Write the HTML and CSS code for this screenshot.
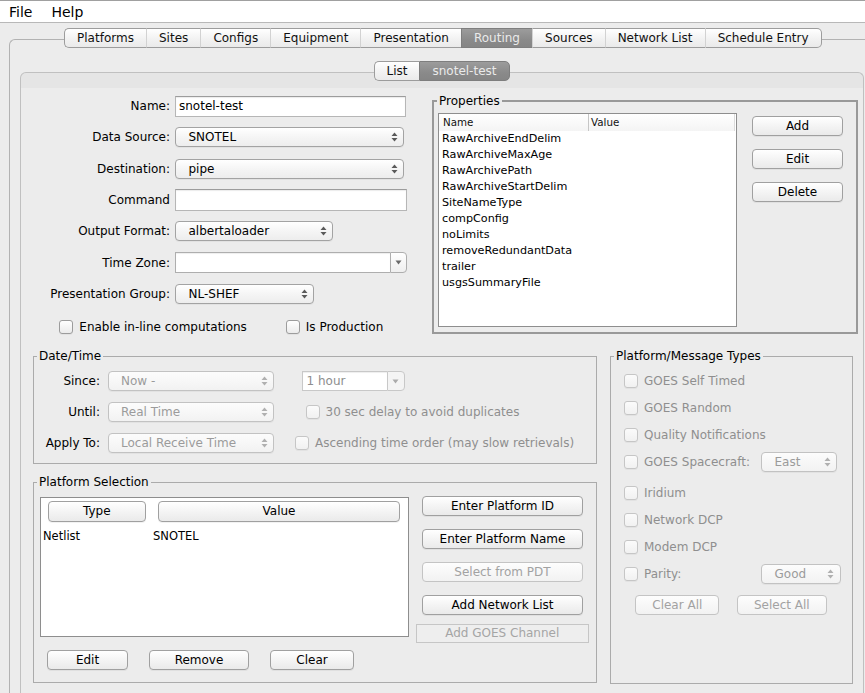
FILE: index.html
```html
<!DOCTYPE html>
<html>
<head>
<meta charset="utf-8">
<title>Routing</title>
<link rel="stylesheet" href="styles.css">
</head>
<body>
<div class="menubar"><span class="menu">File</span><span class="menu">Help</span></div>
<div class="outer">
  <div class="tabs outer-tabs">
    <div class="tab first">Platforms</div>
    <div class="tab">Sites</div>
    <div class="tab">Configs</div>
    <div class="tab">Equipment</div>
    <div class="tab">Presentation</div>
    <div class="tab sel">Routing</div>
    <div class="tab">Sources</div>
    <div class="tab">Network List</div>
    <div class="tab last">Schedule Entry</div>
  </div>
  <div class="inner">
    <div class="tabs inner-tabs">
      <div class="tab first itab">List</div>
      <div class="tab sel last itab">snotel-test</div>
    </div>

    <div class="top">
      <div class="form">
        <div class="lbl">Name:</div>
        <div class="tf w-name">snotel-test</div>

        <div class="lbl">Data Source:</div>
        <div class="combo w-src"><span class="ctext">SNOTEL</span><svg class="arr" width="7" height="10" viewBox="0 0 7 10"><path d="M3.5 0.5 L6.5 4 H0.5 Z M3.5 9.5 L6.5 6 H0.5 Z" fill="#5a5a5a"/></svg></div>

        <div class="lbl">Destination:</div>
        <div class="combo w-src"><span class="ctext">pipe</span><svg class="arr" width="7" height="10" viewBox="0 0 7 10"><path d="M3.5 0.5 L6.5 4 H0.5 Z M3.5 9.5 L6.5 6 H0.5 Z" fill="#5a5a5a"/></svg></div>

        <div class="lbl">Command</div>
        <div class="tf w-cmd"></div>

        <div class="lbl">Output Format:</div>
        <div class="combo w-fmt"><span class="ctext">albertaloader</span><svg class="arr" width="7" height="10" viewBox="0 0 7 10"><path d="M3.5 0.5 L6.5 4 H0.5 Z M3.5 9.5 L6.5 6 H0.5 Z" fill="#5a5a5a"/></svg></div>

        <div class="lbl">Time Zone:</div>
        <div class="ecombo w-tz"><div class="efield"></div><div class="ebtn"><svg width="7" height="5" viewBox="0 0 7 5"><path d="M0.5 0.5 H6.5 L3.5 4.5 Z" fill="#6a6a6a"/></svg></div></div>

        <div class="lbl">Presentation Group:</div>
        <div class="combo w-pg"><span class="ctext">NL-SHEF</span><svg class="arr" width="7" height="10" viewBox="0 0 7 10"><path d="M3.5 0.5 L6.5 4 H0.5 Z M3.5 9.5 L6.5 6 H0.5 Z" fill="#5a5a5a"/></svg></div>

        <div class="cb-row">
          <div class="cbl"><span class="cb"></span><span>Enable in-line computations</span></div>
          <div class="cbl"><span class="cb"></span><span>Is Production</span></div>
        </div>
      </div>

      <div class="group props">
        <div class="gtitle">Properties</div>
        <div class="props-body">
          <div class="ptable">
            <div class="phead"><span class="pname">Name</span><span class="pval">Value</span></div>
            <div class="prow">RawArchiveEndDelim</div>
            <div class="prow">RawArchiveMaxAge</div>
            <div class="prow">RawArchivePath</div>
            <div class="prow">RawArchiveStartDelim</div>
            <div class="prow">SiteNameType</div>
            <div class="prow">compConfig</div>
            <div class="prow">noLimits</div>
            <div class="prow">removeRedundantData</div>
            <div class="prow">trailer</div>
            <div class="prow">usgsSummaryFile</div>
          </div>
          <div class="pbtns">
            <div class="btn w-pb">Add</div>
            <div class="btn w-pb">Edit</div>
            <div class="btn w-pb">Delete</div>
          </div>
        </div>
      </div>
    </div>

    <div class="middle">
      <div class="leftcol">
        <div class="group dt">
          <div class="gtitle">Date/Time</div>
          <div class="dt-grid">
            <div class="lbl">Since:</div>
            <div class="combo dis"><span class="ctext">Now -</span><svg class="arr" width="7" height="10" viewBox="0 0 7 10"><path d="M3.5 0.5 L6.5 4 H0.5 Z M3.5 9.5 L6.5 6 H0.5 Z" fill="#b0b0b0"/></svg></div>
            <div class="ecombo dis w-hour"><div class="efield">1 hour</div><div class="ebtn"><svg width="7" height="5" viewBox="0 0 7 5"><path d="M0.5 0.5 H6.5 L3.5 4.5 Z" fill="#ababab"/></svg></div></div>

            <div class="lbl">Until:</div>
            <div class="combo dis"><span class="ctext">Real Time</span><svg class="arr" width="7" height="10" viewBox="0 0 7 10"><path d="M3.5 0.5 L6.5 4 H0.5 Z M3.5 9.5 L6.5 6 H0.5 Z" fill="#b0b0b0"/></svg></div>
            <div class="cbl dis c-delay"><span class="cb dis"></span><span>30 sec delay to avoid duplicates</span></div>

            <div class="lbl">Apply To:</div>
            <div class="combo dis"><span class="ctext">Local Receive Time</span><svg class="arr" width="7" height="10" viewBox="0 0 7 10"><path d="M3.5 0.5 L6.5 4 H0.5 Z M3.5 9.5 L6.5 6 H0.5 Z" fill="#b0b0b0"/></svg></div>
            <div class="cbl dis c-asc"><span class="cb dis"></span><span>Ascending time order (may slow retrievals)</span></div>
          </div>
        </div>

        <div class="group ps">
          <div class="gtitle">Platform Selection</div>
          <div class="ps-body">
            <div class="ps-left">
              <div class="pstable">
                <div class="pshead">
                  <div class="btn w-type">Type</div>
                  <div class="btn w-value">Value</div>
                </div>
                <div class="psrow"><span class="pscol">Netlist</span><span>SNOTEL</span></div>
              </div>
              <div class="psbtns">
                <div class="btn w-edit">Edit</div>
                <div class="btn w-remove">Remove</div>
                <div class="btn w-clear">Clear</div>
              </div>
            </div>
            <div class="ps-right">
              <div class="btn w-rb">Enter Platform ID</div>
              <div class="btn w-rb">Enter Platform Name</div>
              <div class="btn dis w-rb">Select from PDT</div>
              <div class="btn w-rb">Add Network List</div>
              <div class="flatbtn">Add GOES Channel</div>
            </div>
          </div>
        </div>
      </div>

      <div class="group mt">
        <div class="gtitle">Platform/Message Types</div>
        <div class="mt-body">
          <div class="mrow"><div class="cbl dis"><span class="cb dis"></span><span>GOES Self Timed</span></div></div>
          <div class="mrow"><div class="cbl dis"><span class="cb dis"></span><span>GOES Random</span></div></div>
          <div class="mrow"><div class="cbl dis"><span class="cb dis"></span><span>Quality Notifications</span></div></div>
          <div class="mrow tall gap"><div class="cbl dis"><span class="cb dis"></span><span>GOES Spacecraft:</span></div><div class="combo dis w-east"><span class="ctext">East</span><svg class="arr" width="7" height="10" viewBox="0 0 7 10"><path d="M3.5 0.5 L6.5 4 H0.5 Z M3.5 9.5 L6.5 6 H0.5 Z" fill="#b0b0b0"/></svg></div></div>
          <div class="mrow"><div class="cbl dis"><span class="cb dis"></span><span>Iridium</span></div></div>
          <div class="mrow"><div class="cbl dis"><span class="cb dis"></span><span>Network DCP</span></div></div>
          <div class="mrow"><div class="cbl dis"><span class="cb dis"></span><span>Modem DCP</span></div></div>
          <div class="mrow tall"><div class="cbl dis"><span class="cb dis"></span><span>Parity:</span></div><div class="combo dis w-good"><span class="ctext">Good</span><svg class="arr" width="7" height="10" viewBox="0 0 7 10"><path d="M3.5 0.5 L6.5 4 H0.5 Z M3.5 9.5 L6.5 6 H0.5 Z" fill="#b0b0b0"/></svg></div></div>
          <div class="mbtns">
            <div class="btn dis w-clearall">Clear All</div>
            <div class="btn dis w-selall">Select All</div>
          </div>
        </div>
      </div>
    </div>
  </div>
</div>
</body>
</html>
```
FILE: styles.css
```css
* { box-sizing: border-box; }
html, body { margin: 0; padding: 0; }
body {
  width: 865px;
  height: 693px;
  overflow: hidden;
  background: #ececec;
  font-family: "DejaVu Sans", Verdana, sans-serif;
  font-size: 12px;
  color: #111;
}

/* menu bar */
.menubar {
  height: 23px;
  background: #fff;
  border-top: 1px solid #a0a0a0;
  border-bottom: 1px solid #b8b8b8;
  display: flex;
  align-items: center;
  padding-left: 9px;
  gap: 19px;
  font-size: 14px;
  color: #000;
}

/* tabbed panes */
.outer {
  margin: 16px 0 0 9px;
  width: 856px;
  height: 654px;
  border: 1px solid #b2b2b2;
  border-right: none;
  border-bottom: none;
  border-radius: 6px 0 0 0;
}
.tabs {
  display: flex;
  height: 20px;
  margin-top: -12px;
}
.outer-tabs { padding-left: 54px; }
.inner-tabs { justify-content: center; }
.tab {
  height: 20px;
  line-height: 18px;
  padding: 0 12.05px;
  border-top: 1px solid #9c9c9c;
  border-bottom: 1px solid #9c9c9c;
  border-left: 1px solid #d2d2d2;
  background: linear-gradient(#ffffff, #f2f2f2 55%, #eaeaea);
  white-space: nowrap;
  color: #111;
}
.tab.itab { padding: 0 11.5px; }
.tab.itab.sel { padding: 0 12.5px; }
.tab.first { border-left: 1px solid #9c9c9c; border-radius: 5px 0 0 5px; }
.tab.last { border-right: 1px solid #9c9c9c; border-radius: 0 5px 5px 0; }
.tab.sel {
  background: linear-gradient(#9c9c9c, #8a8a8a 60%, #858585);
  color: #eaeaea;
  border-color: #7e7e7e;
}

.inner {
  margin: 24px 0 0 10px;
  width: 844px;
  height: 621px;
  border: 1px solid #c0c0c0;
  border-bottom: none;
  border-radius: 6px 6px 0 0;
  background: linear-gradient(#e5e5e5 0, #e5e5e5 15px, #ececec 15px);
}

/* top section */
.top {
  display: grid;
  grid-template-columns: 411px 426px;
  height: 253px;
}
.form {
  display: grid;
  grid-template-columns: 149px auto;
  column-gap: 5px;
  grid-auto-rows: 31.3px;
  align-items: center;
  justify-items: start;
  align-content: start;
  padding-top: 9.4px;
}
.lbl { justify-self: end; color: #000; white-space: nowrap; }

.tf {
  height: 21px;
  border: 1px solid #b6b6b6;
  border-top-color: #9c9c9c;
  background: #fff;
  padding-left: 3px;
  line-height: 19px;
  box-shadow: inset 0 1px 1px rgba(0,0,0,0.08);
  color: #000;
}
.w-name { width: 231px; }
.w-cmd { width: 232px; height: 21.5px; }

.combo {
  height: 20px;
  border: 1px solid #a3a3a3;
  border-radius: 4px;
  background: linear-gradient(#ffffff, #f5f5f5 50%, #ededed);
  display: flex;
  align-items: center;
  padding-left: 12.5px;
  box-shadow: 0 1px 0 rgba(0,0,0,0.04);
  color: #000;
  white-space: nowrap;
}
.combo .ctext { flex: 1; }
.combo .arr { flex: none; margin-right: 5.5px; }
.combo.dis {
  color: #9b9b9b;
  border-color: #c2c2c2;
  background: linear-gradient(#fcfcfc, #f2f2f2);
}
.w-src { width: 229px; }
.w-fmt { width: 158px; }
.w-pg { width: 139px; }

.ecombo {
  display: flex;
  height: 21px;
}
.ecombo .efield {
  flex: 1;
  border: 1px solid #aeaeae;
  border-right: none;
  background: #fff;
  padding-left: 4px;
  line-height: 19px;
  box-shadow: inset 0 1px 1px rgba(0,0,0,0.07);
}
.ecombo .ebtn {
  width: 17.5px;
  border: 1px solid #aeaeae;
  border-radius: 0 4px 4px 0;
  background: linear-gradient(#ffffff, #efefef);
  display: flex;
  align-items: center;
  justify-content: center;
}
.ecombo.dis .efield { border-color: #c8c8c8; color: #8e8e8e; }
.ecombo.dis .ebtn { border-color: #c8c8c8; background: #f4f4f4; }
.w-tz { width: 232px; }
.w-hour { width: 103px; }

.cb-row {
  grid-column: 1 / -1;
  display: grid;
  grid-template-columns: 226.5px auto;
  padding-left: 38.3px;
  margin-top: 3px;
}
.cbl {
  display: flex;
  align-items: center;
  gap: 6px;
  white-space: nowrap;
  color: #000;
}
.cbl.dis { color: #8f8f8f; }
.cb {
  width: 14px;
  height: 14px;
  flex: none;
  border: 1px solid #9c9c9c;
  border-radius: 3px;
  background: linear-gradient(#ffffff, #ebebeb);
  box-shadow: 0 1px 0 rgba(0,0,0,0.04);
}
.cb.dis {
  border-color: #c6c6c6;
  background: linear-gradient(#fbfbfb, #f1f1f1);
}

/* group boxes */
.group { border: 1px solid #ababab; }
.gtitle {
  display: table;
  margin: -8px 0 0 3px;
  padding: 0 2px;
  background: #ececec;
  line-height: 14px;
  color: #000;
}

.props {
  margin-top: 19px;
  height: 234px;
  align-self: start;
  border: 2px solid #999;
}
.props-body {
  display: flex;
  margin-top: 5px;
  padding-left: 4px;
}
.ptable {
  width: 299px;
  height: 214px;
  border: 1px solid #8e8e8e;
  background: #fff;
}
.phead {
  display: flex;
  height: 17px;
  width: 296px;
  line-height: 17px;
  font-size: 10.3px;
  background: linear-gradient(#ffffff, #f4f4f4);
  border-right: 1px solid #dcdcdc;
}
.pname { width: 150px; padding-left: 4px; border-right: 1px solid #c6c6c6; }
.pval { padding-left: 2px; }
.prow {
  height: 16px;
  line-height: 16px;
  padding-left: 3px;
  font-size: 11.2px;
  color: #000;
}
.pbtns {
  display: flex;
  flex-direction: column;
  gap: 13px;
  margin: 3px 0 0 15px;
}

.btn {
  height: 20px;
  border: 1px solid #a0a0a0;
  border-radius: 4px;
  background: linear-gradient(#ffffff, #f4f4f4 50%, #eaeaea);
  display: flex;
  align-items: center;
  justify-content: center;
  white-space: nowrap;
  box-shadow: 0 1px 0 rgba(0,0,0,0.05);
  color: #000;
  flex: none;
}
.btn.dis {
  color: #a2a2a2;
  border-color: #c4c4c4;
  background: linear-gradient(#fdfdfd, #f2f2f2);
  box-shadow: none;
}
.w-pb { width: 91px; }

/* middle section */
.middle {
  display: grid;
  grid-template-columns: 564px 243px;
  column-gap: 13px;
  margin-top: 22px;
  padding-left: 12px;
  align-items: start;
}
.dt { height: 108px; }
.dt-grid {
  display: grid;
  grid-template-columns: 66px 166.5px auto;
  column-gap: 7.5px;
  grid-auto-rows: 20px;
  row-gap: 11px;
  align-items: center;
  justify-items: start;
  margin-top: 8px;
}
.dt-grid .combo { width: 166.5px; }
.dt-grid .w-hour { margin-left: 20px; height: 20.5px; }
.c-delay { margin-left: 24px; }
.c-asc { margin-left: 13.5px; }

.ps { margin-top: 18px; height: 201px; }
.ps-body { display: flex; margin-top: 8px; }
.ps-left { margin-left: 6px; width: 369px; }
.pstable {
  height: 140px;
  border: 1px solid #8e8e8e;
  background: #fff;
}
.pshead { display: flex; padding: 3px 0 0 7px; }
.w-type { width: 97.5px; height: 20.7px; }
.w-value { width: 242px; height: 20.7px; margin-left: 12.5px; }
.psrow {
  display: flex;
  height: 16px;
  line-height: 16px;
  margin-top: 6px;
  padding-left: 2px;
  font-size: 11.5px;
  color: #000;
}
.pscol { width: 110px; }
.psbtns { display: flex; margin-top: 13px; }
.w-edit { width: 81px; margin-left: 7px; }
.w-remove { width: 100px; margin-left: 21px; }
.w-clear { width: 84px; margin-left: 21px; }
.ps-right {
  display: flex;
  flex-direction: column;
  gap: 13px;
  margin: -1px 0 0 13px;
}
.w-rb { width: 161px; }
.flatbtn {
  width: 172.5px;
  height: 18.5px;
  margin: -4px 0 0 -6px;
  border: 1px solid #c6c6c6;
  background: #eeeeee;
  color: #a5a5a5;
  display: flex;
  align-items: center;
  justify-content: center;
}

.mt { height: 328px; }
.mt-body { margin-top: 4px; padding-left: 13px; }
.mrow {
  height: 27px;
  display: grid;
  grid-template-columns: 137px auto;
  align-items: center;
}
.mrow.tall { height: 28px; }
.mrow.gap { margin-bottom: 3px; }
.w-east { width: 76px; }
.w-good { width: 79.5px; }
.mbtns { display: flex; margin-top: 7px; padding-left: 11.3px; }
.w-clearall { width: 84px; }
.w-selall { width: 89.7px; margin-left: 17.7px; }
```
